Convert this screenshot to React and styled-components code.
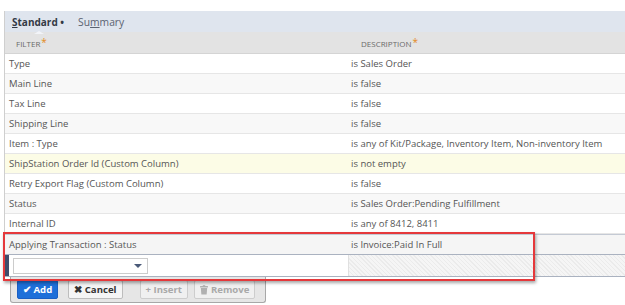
import React from "react";
import styled, { createGlobalStyle } from "styled-components";

const GlobalStyle = createGlobalStyle`
  body {
    margin: 0;
    background: #ffffff;
    font-family: "Open Sans", "Liberation Sans", sans-serif;
    overflow: hidden;
  }
`;

const rows = [
  ["Type", "is Sales Order"],
  ["Main Line", "is false"],
  ["Tax Line", "is false"],
  ["Shipping Line", "is false"],
  ["Item : Type", "is any of Kit/Package, Inventory Item, Non-inventory Item"],
  ["ShipStation Order Id (Custom Column)", "is not empty", "highlight"],
  ["Retry Export Flag (Custom Column)", "is false"],
  ["Status", "is Sales Order:Pending Fulfillment"],
  ["Internal ID", "is any of 8412, 8411"],
  ["Applying Transaction : Status", "is Invoice:Paid In Full", "current"],
];

const App = () => {
  return (
    <Page>
      <GlobalStyle />
      <Panel>
        <TabBar>
          <Tab active>
            <u>S</u>tandard •<Notch />
          </Tab>
          <Tab>
            Su<u>m</u>mary
          </Tab>
        </TabBar>
        <HeaderRow>
          <HeadCell>
            Filter<Star>*</Star>
          </HeadCell>
          <HeadCell>
            Description<Star>*</Star>
          </HeadCell>
        </HeaderRow>
        {rows.map(([filter, desc, kind], i) => (
          <Row key={filter} kind={kind} odd={i % 2 === 1}>
            <Cell>{filter}</Cell>
            <Cell>{desc}</Cell>
          </Row>
        ))}
        <EditRow>
          <EditLeft>
            <Marker />
            <Select>
              <Caret />
            </Select>
          </EditLeft>
          <Hatched />
        </EditRow>
        <Highlight />
      </Panel>
      <ButtonTray>
        <Button variant="primary">✔ Add</Button>
        <Button>✖ Cancel</Button>
        <Button disabled>+ Insert</Button>
        <Button disabled>
          <TrashIcon viewBox="0 0 10 12">
            <rect x="0" y="1" width="10" height="2" rx="0.5" />
            <rect x="3.5" y="0" width="3" height="1.5" />
            <path d="M1 3.5 h8 l-0.7 8 h-6.6 z" />
          </TrashIcon>
          Remove
        </Button>
      </ButtonTray>
    </Page>
  );
};

const Page = styled.div`
  padding: 11px 0 0 4px;
`;

const Panel = styled.div`
  position: relative;
  border-left: 1px solid #cfcfcf;
`;

const TabBar = styled.div`
  display: flex;
  align-items: center;
  height: 21px;
  background: #dfe5ee;
  padding-left: 7px;
  gap: 14px;
`;

const Tab = styled.div`
  position: relative;
  font-size: ${(p) => (p.active ? "10px" : "10.3px")};
  font-weight: ${(p) => (p.active ? 700 : 400)};
  color: ${(p) => (p.active ? "#333a45" : "#5a6270")};
  u {
    text-decoration-thickness: 1px;
  }
`;

const Notch = styled.span`
  position: absolute;
  left: 22px;
  bottom: -5px;
  width: 0;
  height: 0;
  border-left: 5px solid transparent;
  border-right: 5px solid transparent;
  border-bottom: 3px solid #f2f4f8;
`;

const HeaderRow = styled.div`
  display: grid;
  grid-template-columns: 343px 1fr;
  height: 21px;
  align-items: center;
  background: #e3e3e3;
  border-bottom: 1px solid #d4d4d4;
`;

const HeadCell = styled.div`
  font-size: 8px;
  text-transform: uppercase;
  color: #6a6a6a;
  padding-left: 11px;
  &:last-child {
    padding-left: 13px;
  }
`;

const Star = styled.span`
  color: #e38a1c;
  font-size: 10px;
  position: relative;
  top: -1px;
  margin-left: 1px;
`;

const Row = styled.div`
  display: grid;
  grid-template-columns: 343px 1fr;
  height: 20px;
  box-sizing: border-box;
  align-items: center;
  border-bottom: 1px solid ${(p) => (p.kind === "current" ? "#aab2c0" : "#e6e6e6")};
  background: ${(p) =>
    p.kind === "highlight"
      ? "#fcfce6"
      : p.kind === "current"
      ? "#f5f5f5"
      : p.odd
      ? "#f8f8f8"
      : "#ffffff"};
  ${(p) => p.kind === "current" && "height: 21px; border-top: 1px solid #c4cad4;"}
`;

const Cell = styled.div`
  font-size: 9.5px;
  color: #555555;
  padding-left: 4px;
  white-space: nowrap;
  &:last-child {
    padding-left: 3px;
  }
`;

const EditRow = styled.div`
  display: grid;
  grid-template-columns: 343px 1fr;
  height: 22px;
  box-sizing: border-box;
  border-bottom: 1px solid #aab2c0;
  background: #ffffff;
`;

const EditLeft = styled.div`
  display: flex;
  align-items: center;
  gap: 4px;
`;

const Marker = styled.div`
  width: 4px;
  align-self: stretch;
  background: #3f4d6b;
`;

const Select = styled.div`
  position: relative;
  width: 135px;
  height: 16px;
  box-sizing: border-box;
  border: 1px solid #cccccc;
  background: #ffffff;
`;

const Caret = styled.span`
  position: absolute;
  right: 5px;
  top: 5px;
  border-left: 4px solid transparent;
  border-right: 4px solid transparent;
  border-top: 4px solid #4a5a78;
`;

const Hatched = styled.div`
  background: repeating-linear-gradient(
    45deg,
    #ebebeb 0px,
    #ebebeb 1px,
    #f5f5f5 1px,
    #f5f5f5 3px
  );
  border-left: 1px solid #e0e0e0;
`;

const Highlight = styled.div`
  position: absolute;
  left: -2px;
  top: 221px;
  width: 532px;
  height: 49px;
  box-sizing: border-box;
  border: 2px solid #e5383b;
  box-shadow: 1px 2px 3px rgba(0, 0, 0, 0.35);
  pointer-events: none;
`;

const ButtonTray = styled.div`
  display: flex;
  align-items: center;
  gap: 10px;
  margin-left: 6px;
  width: 256px;
  height: 26px;
  box-sizing: border-box;
  padding: 0 6px;
  background: #e6e6e6;
  border: 1px solid #a8a8a8;
  border-top: none;
  border-radius: 0 0 3px 3px;
`;

const Button = styled.button`
  display: flex;
  align-items: center;
  justify-content: center;
  flex-shrink: 0;
  white-space: nowrap;
  gap: 3px;
  height: 19px;
  padding: 0 5px;
  font-family: "Open Sans", "Liberation Sans", sans-serif;
  font-size: 9.6px;
  font-weight: 700;
  border-radius: 2px;
  border: 1px solid ${(p) => (p.variant === "primary" ? "#1a5fc4" : "#bdbdbd")};
  background: ${(p) => (p.variant === "primary" ? "#1e6fd9" : "#f5f5f5")};
  color: ${(p) => (p.variant === "primary" ? "#ffffff" : "#333333")};
  &:disabled {
    color: #a9a9a9;
    background: #f0f0f0;
    border-color: #cdcdcd;
  }
  &:nth-child(3) {
    margin-left: 7px;
  }
  &:nth-child(4) {
    margin-left: -4px;
  }
`;

const TrashIcon = styled.svg`
  width: 8px;
  height: 10px;
  fill: #b0b0b0;
`;

export default App;
